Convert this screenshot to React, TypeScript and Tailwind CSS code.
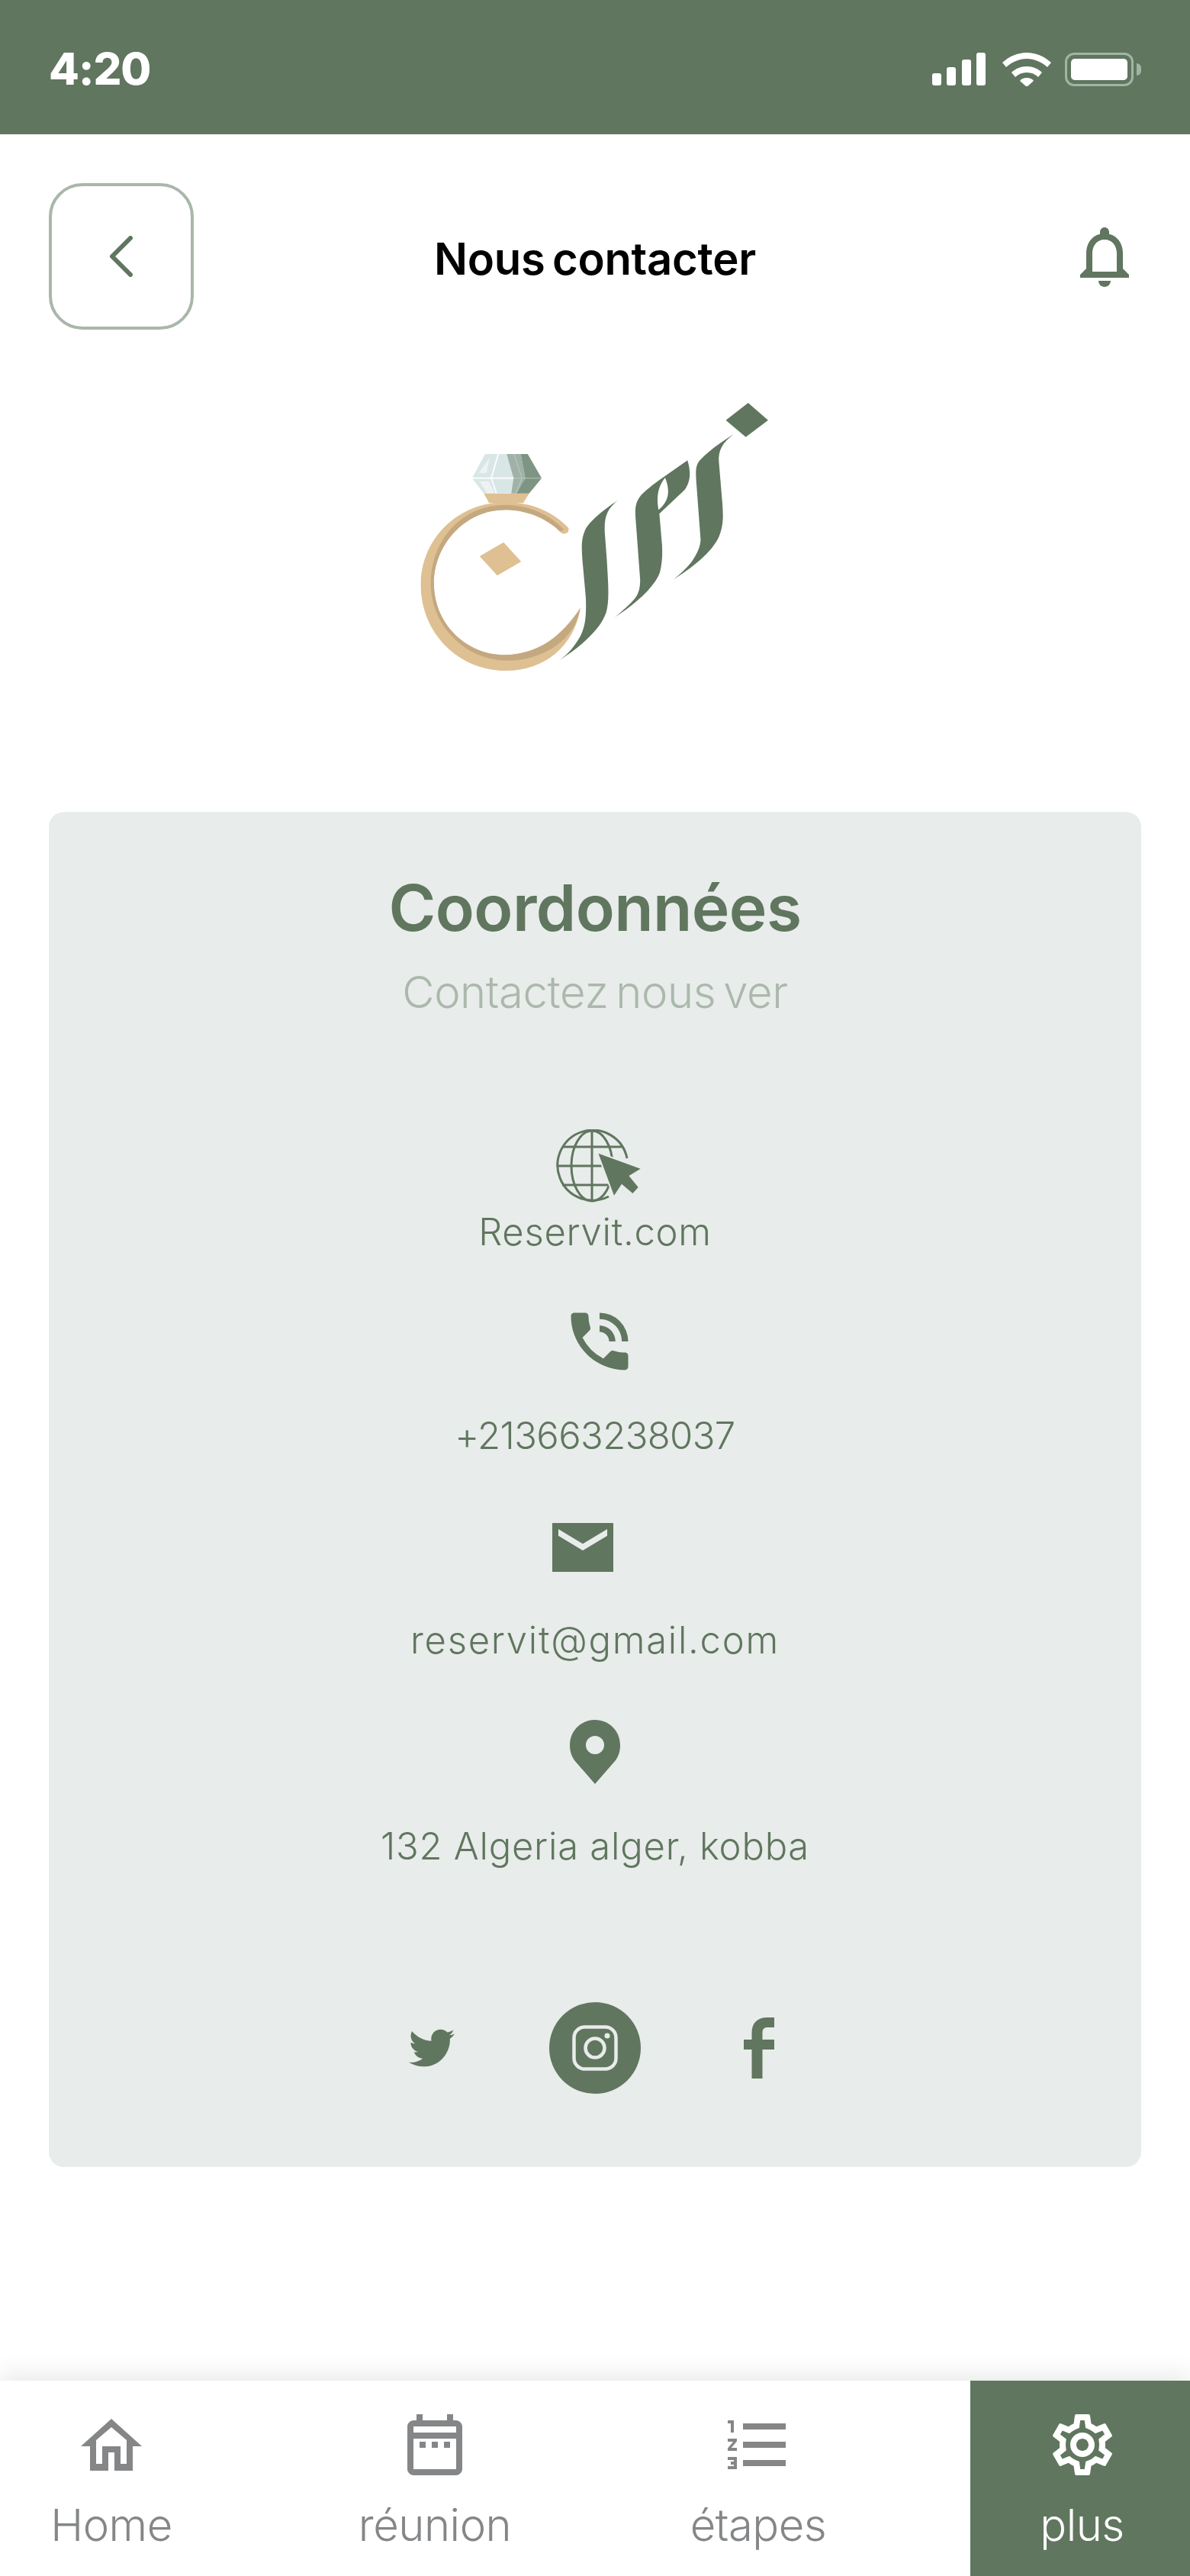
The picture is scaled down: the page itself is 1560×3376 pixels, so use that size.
import { FaTwitter } from 'react-icons/fa';
import {
  MdFormatListNumbered,
  MdOutlineNotifications,
  MdOutlineSettings,
  MdPhoneInTalk,
} from 'react-icons/md';

const jakarta = "font-['Inter',sans-serif]";

function StatusIcons() {
  return (
    <div className="flex items-center">
      <svg width="71" height="43" viewBox="0 0 71 43" fill="#fff">
        <rect x="0" y="27" width="12" height="16" rx="3" />
        <rect x="19" y="19" width="12" height="24" rx="3" />
        <rect x="39" y="9" width="12" height="34" rx="3" />
        <rect x="58" y="0" width="12" height="43" rx="3" />
      </svg>
      <svg className="ml-[21px]" width="64" height="44" viewBox="0 0 64 44" fill="#fff">
        <path d="M0 13C9 5 20 0 32 0s23 5 32 13l-5 6C51 12 42 8 32 8S13 12 5 19z" />
        <path d="M12 26c5-5 12-8 20-8s15 3 20 8l-5 6c-4-4-9-6-15-6s-11 2-15 6z" />
        <path d="M23 37c2-3 5-4 9-4s7 1 9 4l-9 8z" />
      </svg>
      <div className="ml-[18px] flex items-center">
        <div className="w-[90px] h-[44px] rounded-[12px] border-[3px] border-[#a3b3a4] p-[5px]">
          <div className="w-full h-full bg-white rounded-[5px]" />
        </div>
        <div className="ml-[4px] w-[6px] h-[16px] bg-[#a3b3a4] rounded-r-full" />
      </div>
    </div>
  );
}

function Logo() {
  return (
    <svg className="block" width="540" height="400" viewBox="0 0 1568 1200" preserveAspectRatio="none">
      <path fill="#dec092" d="M390 440H562L540 478H410Z" />
      <path
        fill="#dec092"
        d="M712 575C650 510 570 475 470 475C290 475 150 620 150 800C150 985 290 1137 475 1137C620 1137 735 1040 757 890C720 950 680 990 640 1020C590 1055 530 1075 470 1075C320 1075 200 950 200 795C200 640 320 505 470 505C550 505 625 535 680 590C690 605 718 600 712 575Z"
      />
      <path
        fill="#c4a880"
        d="M695 582C640 522 560 485 470 485C310 485 188 620 188 795C188 960 320 1097 480 1097C620 1097 740 1010 757 890C720 950 680 990 640 1020C590 1055 530 1075 470 1075C320 1075 200 950 200 795C200 640 320 505 470 505C550 505 625 535 680 590Z"
      />
      <path fill="#dec092" d="M465 632L532 708L441 763L374 687Z" />
      <path fill="#d9e6e6" d="M395 285H480L503 380L494 440H390L345 380Z" />
      <path fill="#a0b2a7" d="M477 285H530L548 380L520 440H494L503 380Z" />
      <path fill="#7f9584" d="M530 285H557L610 380L562 440H515L548 380Z" />
      <path fill="#edf3f3" d="M412 300L400 360H370ZM372 392H410L430 438H402Z" />
      <path stroke="#fff" strokeWidth="5" fill="none" d="M445 285L418 380L438 440M345 380H503" />
      <path stroke="#c5d0c9" strokeWidth="4" fill="none" opacity="0.6" d="M505 285L535 380L512 440M503 380H610" />
      <g fill="#60765f">
        <path d="M900 467C850 500 790 550 775 585C760 620 762 650 765 700L778 850C782 950 770 985 740 1030C720 1060 700 1080 676 1097C760 1040 830 980 855 910C870 860 862 780 858 700L850 590C848 530 860 500 900 467Z" />
        <path
          fillRule="evenodd"
          d="M1165 310C1120 345 1040 395 990 445C970 470 965 490 967 530L985 780C985 830 970 850 950 870C930 890 910 910 888 927C960 880 1040 810 1060 750C1070 710 1070 670 1068 640L1058 520L1155 425C1175 395 1180 360 1165 310ZM1080 378C1055 410 1045 450 1055 505C1095 470 1100 430 1080 378Z"
        />
        <path d="M1340 208C1290 240 1230 285 1205 320C1195 340 1197 360 1199 400L1215 620C1215 650 1200 680 1180 710C1160 735 1140 755 1112 778C1180 735 1260 670 1285 610C1305 560 1300 520 1298 480L1285 320C1280 270 1300 240 1340 208Z" />
        <path d="M1396 84L1472 152L1387 218L1311 152Z" />
      </g>
    </svg>
  );
}

function GlobeIcon() {
  return (
    <svg className="block ml-[10px]" width="112" height="96" viewBox="0 0 112 96" fill="none" stroke="#60765f" strokeWidth="3">
      <path d="M93 38A46 46 0 1 0 69 88" />
      <ellipse cx="47" cy="48" rx="27" ry="46" />
      <path d="M47 2V94M8 23H86M2 48H90M8 73H86" />
      <path
        fill="#60765f"
        stroke="#e8ecea"
        strokeWidth="4"
        strokeLinejoin="round"
        paintOrder="stroke"
        d="M55.5 31.7L110.6 51.7L95.5 61L107.7 76L100.4 84L86 71.7L76 86.7Z"
      />
    </svg>
  );
}

function MailIcon() {
  return (
    <svg className="block" width="80" height="64" viewBox="0 0 80 64">
      <path fill="#60765f" d="M0 0H80V64H0Z" />
      <path fill="#e8ecea" d="M8 8L40 27.3L72 8V16.7L40 36L8 16.7Z" />
    </svg>
  );
}

function PinIcon() {
  return (
    <svg className="block" width="66" height="84" viewBox="0 0 66 84">
      <path
        fill="#60765f"
        fillRule="evenodd"
        d="M33 0C15 0 0 14 0 33C0 41 2 47 6 53L33 84L60 53C64 47 66 41 66 33C66 14 51 0 33 0ZM33 21A12 12 0 1 1 33 45A12 12 0 1 1 33 21Z"
      />
    </svg>
  );
}

function InstagramGlyph() {
  return (
    <svg width="60" height="60" viewBox="0 0 60 60" fill="none" stroke="#e8ecea" strokeWidth="4.5">
      <rect x="2.5" y="2.5" width="55" height="55" rx="14" />
      <circle cx="30" cy="30" r="12.5" />
      <circle cx="46" cy="14" r="3.5" fill="#e8ecea" stroke="none" />
    </svg>
  );
}

function FacebookGlyph() {
  return (
    <svg className="block ml-[135px]" width="40" height="80" viewBox="0 0 40 80" fill="#60765f">
      <path d="M40 0H31C18 0 10.5 7 10.5 20V29H0V42H10.5V80H24.5V42H40V29H24.5V20C24.5 15 27 13 31 13H40Z" />
    </svg>
  );
}

function HomeIcon() {
  return (
    <svg width="80" height="68" viewBox="0 0 80 68" fill="#848688">
      <path
        fillRule="evenodd"
        d="M40 0L80 36H68V68H44V44H36V68H12V36H0ZM40 11L20 28V59H28V36H52V59H60V28Z"
      />
    </svg>
  );
}

function CalendarIcon() {
  return (
    <svg width="72" height="80" viewBox="0 0 72 80" fill="#848688">
      <path
        fillRule="evenodd"
        d="M12 0H20V8H52V0H60V8H64C68 8 72 12 72 16V72C72 76 68 80 64 80H8C4 80 0 76 0 72V16C0 12 4 8 8 8H12ZM8 16V24H64V16ZM8 32V72H64V32ZM16 36H24V44H16ZM32 36H40V44H32ZM48 36H56V44H48Z"
      />
    </svg>
  );
}

function NavItem({ icon, label, className }: { icon: React.ReactNode; label: string; className: string }) {
  return (
    <div className={className}>
      <div className="h-[80px] mt-[44px] flex items-center justify-center">{icon}</div>
      <div className={`mt-[30px] h-[70px] leading-[70px] text-[58px] font-light tracking-[-0.5px] text-center ${jakarta}`}>
        {label}
      </div>
    </div>
  );
}

export default function App() {
  return (
    <div className="w-[1560px] h-[3376px] bg-white flex flex-col overflow-hidden">
      <div className="h-[176px] shrink-0 bg-[#60765f] flex items-center justify-between pl-[64px] pr-[64px] pt-[5px]">
        <span className={`text-[58px] font-extrabold tracking-[-1px] text-white ${jakarta}`}>4:20</span>
        <StatusIcons />
      </div>

      <div className="mt-[64px] px-[64px] flex items-center justify-between">
        <button className="w-[190px] h-[192px] rounded-[44px] border-[4px] border-[#a9b7aa] flex items-center justify-center">
          <svg width="32" height="54" viewBox="0 0 32 54" fill="none" stroke="#60765f" strokeWidth="6" strokeLinecap="round" strokeLinejoin="round">
            <path d="M28 3L4 27L28 51" />
          </svg>
        </button>
        <h1 className={`pt-[6px] text-[58px] font-semibold tracking-[-0.3px] [word-spacing:-5px] text-black ${jakarta}`}>
          Nous contacter
        </h1>
        <div className="w-[190px] flex justify-end">
          <MdOutlineNotifications size={96} color="#60765f" />
        </div>
      </div>

      <div className="mt-[68px] flex justify-center pr-[20px]">
        <Logo />
      </div>

      <div className="mt-[164px] mx-[64px] h-[1776px] rounded-[20px] bg-[#e8ecea] flex flex-col items-center pt-[76px]">
        <h2 className={`h-[100px] leading-[100px] text-[84px] font-semibold tracking-[-0.6px] text-[#60765f] ${jakarta}`}>
          Coordonnées
        </h2>
        <p className={`mt-[20px] h-[80px] leading-[80px] text-[58px] font-light tracking-[-0.4px] [word-spacing:-6px] text-[#abb8ac] ${jakarta}`}>
          Contactez nous ver
        </p>

        <div className="mt-[140px] h-[96px]">
          <GlobeIcon />
        </div>
        <div className={`mt-[9px] h-[60px] leading-[60px] text-[49px] font-light tracking-[0.7px] text-[#60765f] ${jakarta}`}>
          Reservit.com
        </div>

        <MdPhoneInTalk size={100} color="#60765f" className="mt-[63px] ml-[12px] shrink-0" />
        <div className={`mt-[44px] h-[60px] leading-[60px] text-[49px] font-light tracking-[-0.6px] text-[#60765f] ${jakarta}`}>
          +213663238037
        </div>

        <div className="mt-[84px] mr-[32px]">
          <MailIcon />
        </div>
        <div className={`mt-[60px] h-[60px] leading-[60px] text-[49px] font-light tracking-[1.7px] text-[#60765f] ${jakarta}`}>
          reservit@gmail.com
        </div>

        <div className="mt-[74px]">
          <PinIcon />
        </div>
        <div className={`mt-[52px] h-[60px] leading-[60px] text-[49px] font-light tracking-[0.75px] text-[#60765f] ${jakarta}`}>
          132 Algeria alger, kobba
        </div>

        <div className="mt-[174px] w-full flex items-center h-[120px]">
          <div className="flex-1 flex justify-end">
            <div className="mr-[124px]">
              <FaTwitter size={60} color="#60765f" />
            </div>
          </div>
          <div className="w-[120px] h-[120px] rounded-full bg-[#60765f] flex items-center justify-center">
            <InstagramGlyph />
          </div>
          <div className="flex-1 flex justify-start">
            <FacebookGlyph />
          </div>
        </div>
      </div>

      <div className="mt-auto h-[256px] flex justify-between bg-white shadow-[0_-8px_30px_rgba(0,0,0,0.09)]">
        <NavItem className="w-[292px] text-[#848688]" label="Home" icon={<HomeIcon />} />
        <NavItem className="w-[292px] text-[#848688]" label="réunion" icon={<CalendarIcon />} />
        <NavItem
          className="w-[292px] text-[#848688]"
          label="étapes"
          icon={<MdFormatListNumbered size={96} color="#848688" />}
        />
        <NavItem
          className="w-[288px] pl-[5px] bg-[#60765f] text-white"
          label="plus"
          icon={<MdOutlineSettings size={96} color="#fff" />}
        />
      </div>
    </div>
  );
}
